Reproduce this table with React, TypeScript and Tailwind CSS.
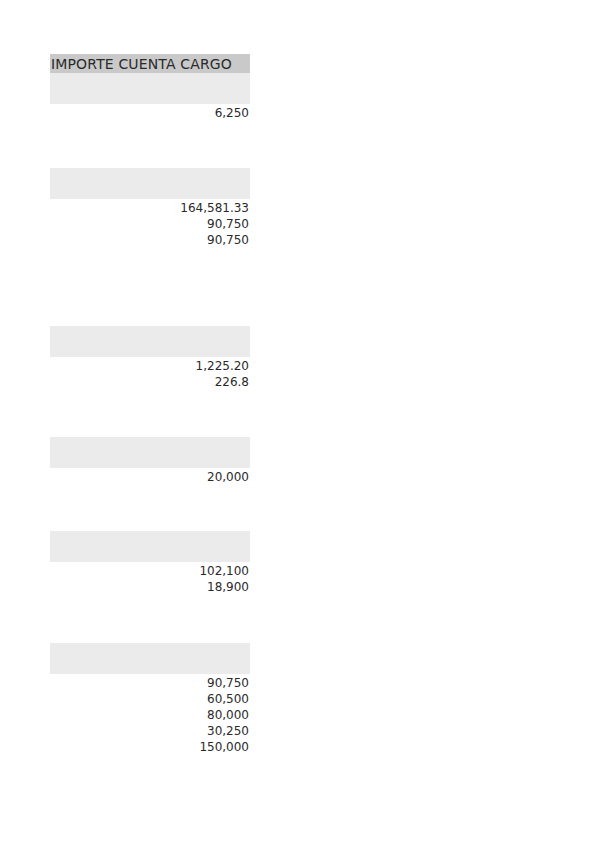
const sections = [
  { mt: 'mt-0', values: ['6,250'] },
  { mt: 'mt-[47px]', values: ['164,581.33', '90,750', '90,750'] },
  { mt: 'mt-[78px]', values: ['1,225.20', '226.8'] },
  { mt: 'mt-[47px]', values: ['20,000'] },
  { mt: 'mt-[46px]', values: ['102,100', '18,900'] },
  { mt: 'mt-[48px]', values: ['90,750', '60,500', '80,000', '30,250', '150,000'] },
]

export default function App() {
  return (
    <div className="w-[599px] h-[848px] bg-white pt-[54px] pl-[50px] text-[#2a2a2a] font-['DejaVu_Sans',sans-serif]">
      <div className="w-[200px] flex flex-col">
        {/* column header */}
        <div className="h-[19px] bg-[#c9c9c9] pl-[1px] text-[14px] tracking-[0.15px] leading-[20px] whitespace-nowrap">
          IMPORTE CUENTA CARGO
        </div>

        {sections.map((s, i) => (
          <div key={i} className={`${s.mt} flex flex-col`}>
            <div className="h-[31px] bg-[#ebebeb]" />
            <div className="flex flex-col items-end pt-[1px] pr-[1px] text-[12px] leading-[16px]">
              {s.values.map((v, j) => (
                <span key={j}>{v}</span>
              ))}
            </div>
          </div>
        ))}
      </div>
    </div>
  )
}
